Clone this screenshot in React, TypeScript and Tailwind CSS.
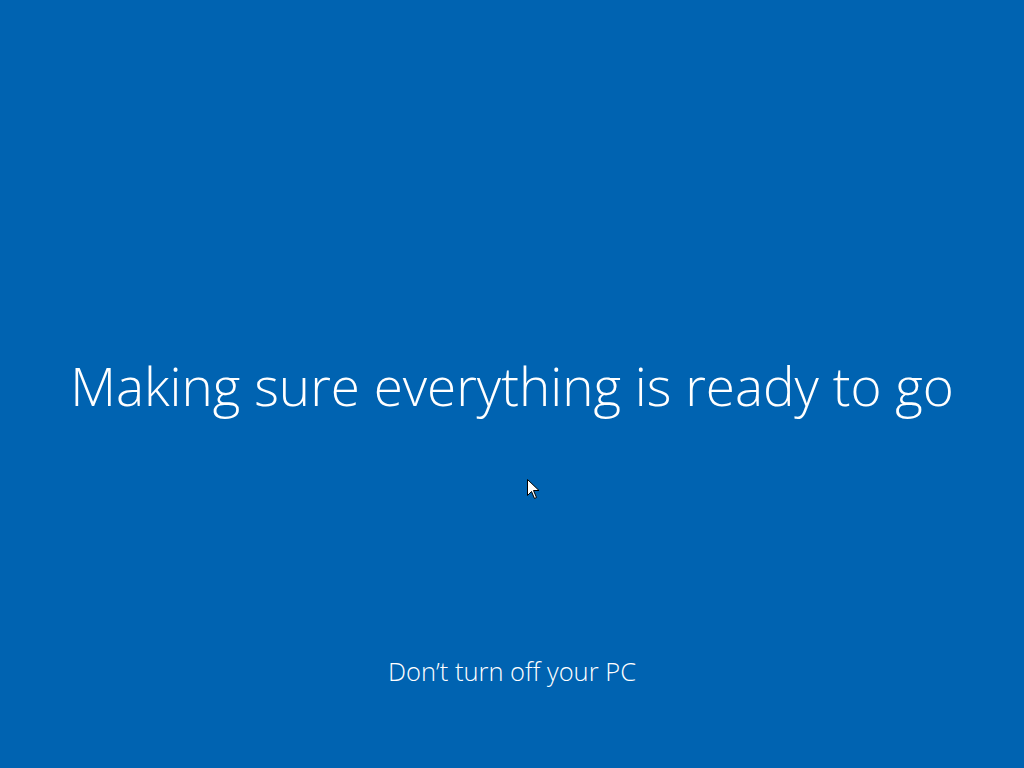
export default function App() {
  return (
    <div
      className="relative flex h-[768px] w-[1024px] flex-col items-center bg-[#0063b1] text-white"
      style={{ fontFamily: '"Open Sans", "Liberation Sans", sans-serif' }}
    >
      <div className="mt-[349px] text-[53px] font-light leading-[74px]">
        Making sure everything is ready to go
      </div>
      <div className="mt-[232px] text-[25.5px] font-light leading-[32px]">
        Don’t turn off your PC
      </div>

      {/* mouse pointer */}
      <svg
        className="absolute left-[527px] top-[479px]"
        width="13"
        height="21"
        viewBox="0 0 13 21"
      >
        <path
          d="M0.5 0.5 L0.5 16.5 L4.5 12.5 L7.5 19.5 L9.5 18.5 L6.5 11.5 L12 11.5 Z"
          fill="white"
          stroke="black"
          strokeWidth="1"
          strokeLinejoin="miter"
        />
      </svg>
    </div>
  );
}
